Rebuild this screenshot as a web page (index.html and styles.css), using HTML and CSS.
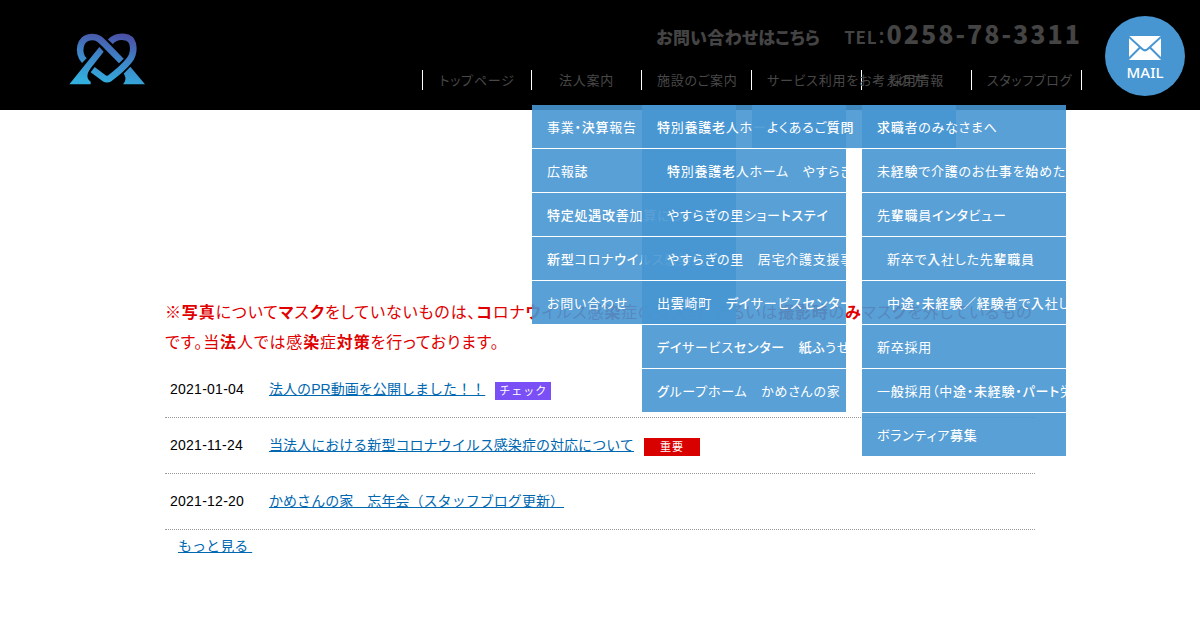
FILE: index.html
```
<!DOCTYPE html>
<html lang="ja">
<head>
  <meta charset="UTF-8">
  <meta name="viewport" content="width=device-width, initial-scale=1.0">
  <title>お知らせ</title>
  <link rel="stylesheet" href="styles.css">
</head>
<body>
  <header class="header">
    <a class="logo" href="#">
      <svg width="76" height="52" viewBox="87 70 228 156">
        <defs>
          <linearGradient id="logoGrad" gradientUnits="userSpaceOnUse" x1="220" y1="70" x2="190" y2="224">
            <stop offset="0" stop-color="#4a50a5"/>
            <stop offset="0.45" stop-color="#3f82c6"/>
            <stop offset="1" stop-color="#33aedd"/>
          </linearGradient>
        </defs>
        <g fill="none" stroke="url(#logoGrad)" stroke-width="20">
          <path d="M133 153C112 132 116 82 156 82C176 82 184 93 199 108L244 154"/>
          <path d="M211 96C224 82 244 78 262 84C286 94 284 132 267 153C250 174 225 194 209 206Q201 211 193 206L158 180"/>
        </g>
        <g fill="url(#logoGrad)">
          <path d="M178 112L191 126L152 176C138 194 140 208 152 216V224H88Z"/>
          <path d="M271 171L315 224H249C260 210 257 200 251 192Z"/>
        </g>
      </svg>
    </a>
    <div class="header-main">
      <p class="contact"><span class="contact-label">お問い合わせはこちら</span><span class="contact-tel">TEL：</span><span class="contact-number">0258-78-3311</span></p>
      <ul class="nav">
        <li><a href="#">トップページ</a></li>
        <li><a href="#">法人案内</a>
          <ul class="submenu">
            <li>事業・<b>決算</b>報告</li>
            <li>広報<b>誌</b></li>
            <li><b>特定処遇改善</b>加算について</li>
            <li><b>新型</b>コロナ<b>ウイ</b>ルス感染症</li>
            <li>お問い合わせ</li>
          </ul>
        </li>
        <li><a href="#">施設のご案内</a>
          <ul class="submenu">
            <li><b>特</b>別<b>養護老</b>人ホーム</li>
            <li class="child"><b>特</b>別<b>養護老</b>人ホーム　やすらぎの里</li>
            <li class="child">やすらぎの里ショー<b>トステイ</b></li>
            <li class="child">やすらぎの里　居宅介護支援事業所</li>
            <li>出<b>雲</b>崎町　<b>デイ</b>サービス<b>センター</b></li>
            <li><b>デイ</b>サービス<b>センター</b>　<b>紙ふ</b>うせん</li>
            <li><b>グ</b>ループホーム　かめさんの家</li>
          </ul>
        </li>
        <li><a href="#">サービス利用をお考えの方</a>
          <ul class="submenu">
            <li>よくあるご<b>質問</b></li>
          </ul>
        </li>
        <li><a href="#">採用情報</a>
          <ul class="submenu">
            <li><b>求職</b>者のみなさまへ</li>
            <li>未<b>経験</b>で介<b>護</b>のお仕<b>事</b>を<b>始</b>めた方へ</li>
            <li>先<b>輩職</b>員<b>インタ</b>ビュー</li>
            <li class="child">新卒で<b>入</b>社した先<b>輩職</b>員</li>
            <li class="child">中<b>途</b>・<b>未経験</b>／<b>経験</b>者で<b>入</b>社した職員</li>
            <li>新卒採用</li>
            <li>一<b>般</b>採用（中<b>途</b>・<b>未経験</b>・<b>パート</b>労働者）</li>
            <li>ボランティア<b>募集</b></li>
          </ul>
        </li>
        <li><a href="#">スタッフブログ</a></li>
      </ul>
    </div>
    <a class="mail" href="#">
      <svg width="32" height="24" viewBox="0 0 32 24">
        <rect width="32" height="24" rx="1.5" fill="#fff"/>
        <path d="M0 1L13.500 13.300Q16 15.500 18.500 13.300L32 1M0 22.500L11 11.500M32 22.500L21 11.500" fill="none" stroke="#4796d2" stroke-width="2"/>
      </svg>
      <span>MAIL</span>
    </a>
  </header>

  <main class="content">
    <p class="notice">※<b>写真</b>について<b>マ</b>ス<b>ク</b>をしていないものは、<b>コ</b>ロナ<b>ウ</b>イルス感<b>染</b>症の拡大前、あるいは<b>撮影時</b>の<b>み</b>マス<b>ク</b>を外しているもの<br>です。当<b>法</b>人では感<b>染</b>症<b>対策</b>を行っております。</p>
    <ul class="news">
      <li><time>2021-01-04</time><a href="#">法人のPR動画を公開しました！！</a><span class="tag check">チェック</span></li>
      <li><time>2021-11-24</time><a href="#">当法人における新型コロナウイルス感染症の対応について</a><span class="tag important">重要</span></li>
      <li><time>2021-12-20</time><a href="#">かめさんの家　忘年会（スタッフブログ更新）</a></li>
    </ul>
    <p class="more"><a href="#">もっと見る&nbsp;</a></p>
  </main>
</body>
</html>
```
FILE: styles.css
```
* {
  box-sizing: border-box;
}

body {
  margin: 0;
  background: #fff;
  color: #000;
  font-family: "Liberation Sans", "Noto Sans CJK JP", sans-serif;
  font-size: 14px;
  letter-spacing: 0.05px;
}

ul {
  margin: 0;
  padding: 0;
  list-style: none;
}

.header {
  display: flex;
  align-items: flex-start;
  height: 110px;
  background: #000;
  font-family: "Noto Sans CJK JP", sans-serif;
  font-feature-settings: "palt";
  font-size: 13px;
  letter-spacing: 0.75px;
}

.header a {
  text-decoration: none;
}

.logo {
  margin: 33px 277px 0 69px;
}

.logo svg {
  display: block;
}

.header-main {
  width: 660px;
}

.contact {
  display: flex;
  justify-content: flex-end;
  align-items: baseline;
  height: 70px;
  margin: 0;
  padding-top: 14px;
  color: #444;
  font-size: 17px;
  font-weight: bold;
  line-height: 38px;
  white-space: nowrap;
}

.contact-label {
  margin-right: 24px;
  font-weight: 900;
  letter-spacing: 0.3px;
}

.contact-tel {
  font-weight: 700;
}

.contact-number {
  font-size: 25px;
  font-weight: 900;
  letter-spacing: 2px;
}

.nav {
  display: flex;
}

.nav > li {
  position: relative;
  width: 110px;
  height: 20px;
  border-right: 1px solid #fff;
}

.nav > li:first-child {
  border-left: 1px solid #fff;
}

.nav > li > a {
  display: block;
  padding: 0 15px;
  color: #484848;
  line-height: 19px;
  text-align: center;
  white-space: nowrap;
}

.submenu {
  position: absolute;
  top: 35px;
  left: 0;
  width: 204px;
  overflow: hidden;
}

.submenu li {
  height: 44px;
  padding-left: 15px;
  border-bottom: 1px solid #fff;
  background: rgba(71, 150, 210, 0.9);
  background-clip: padding-box;
  color: #fff;
  line-height: 43px;
  white-space: nowrap;
}

.submenu li:last-child {
  height: 43px;
  border-bottom: none;
}

.submenu .child {
  padding-left: 25px;
}

.submenu b {
  font-weight: 500;
}

.mail {
  display: flex;
  flex-direction: column;
  align-items: center;
  width: 80px;
  height: 80px;
  margin: 16px 0 0 23px;
  padding-top: 20px;
  border-radius: 50%;
  background: #4796d2;
  color: #fff;
  font-family: "Noto Sans", sans-serif;
  font-size: 15px;
  font-weight: 500;
  letter-spacing: 0;
  line-height: 25px;
}

.content {
  width: 870px;
  margin: 186px auto 0;
}

.notice {
  margin: 0 0 6px;
  color: #e00000;
  font-family: "Noto Sans CJK JP", sans-serif;
  font-feature-settings: "palt";
  font-size: 16px;
  letter-spacing: 0.85px;
  line-height: 30px;
  white-space: nowrap;
}

.news li {
  display: flex;
  align-items: center;
  height: 56px;
  padding: 0 0 2px 5px;
  border-bottom: 1px dotted #999;
}

.news time {
  width: 99px;
  letter-spacing: 0.25px;
}

.news a,
.more a {
  color: #0068b0;
}

.news a {
  margin-bottom: 2px;
}

.tag {
  width: 56px;
  height: 18px;
  margin: 4px 0 0 10px;
  color: #fff;
  font-size: 11px;
  letter-spacing: 1px;
  line-height: 18px;
  text-align: center;
}

.check {
  background: #7a4ff5;
}

.important {
  background: #d90000;
}

.more {
  margin: 6px 0 0 13px;
  line-height: 20px;
}
```
